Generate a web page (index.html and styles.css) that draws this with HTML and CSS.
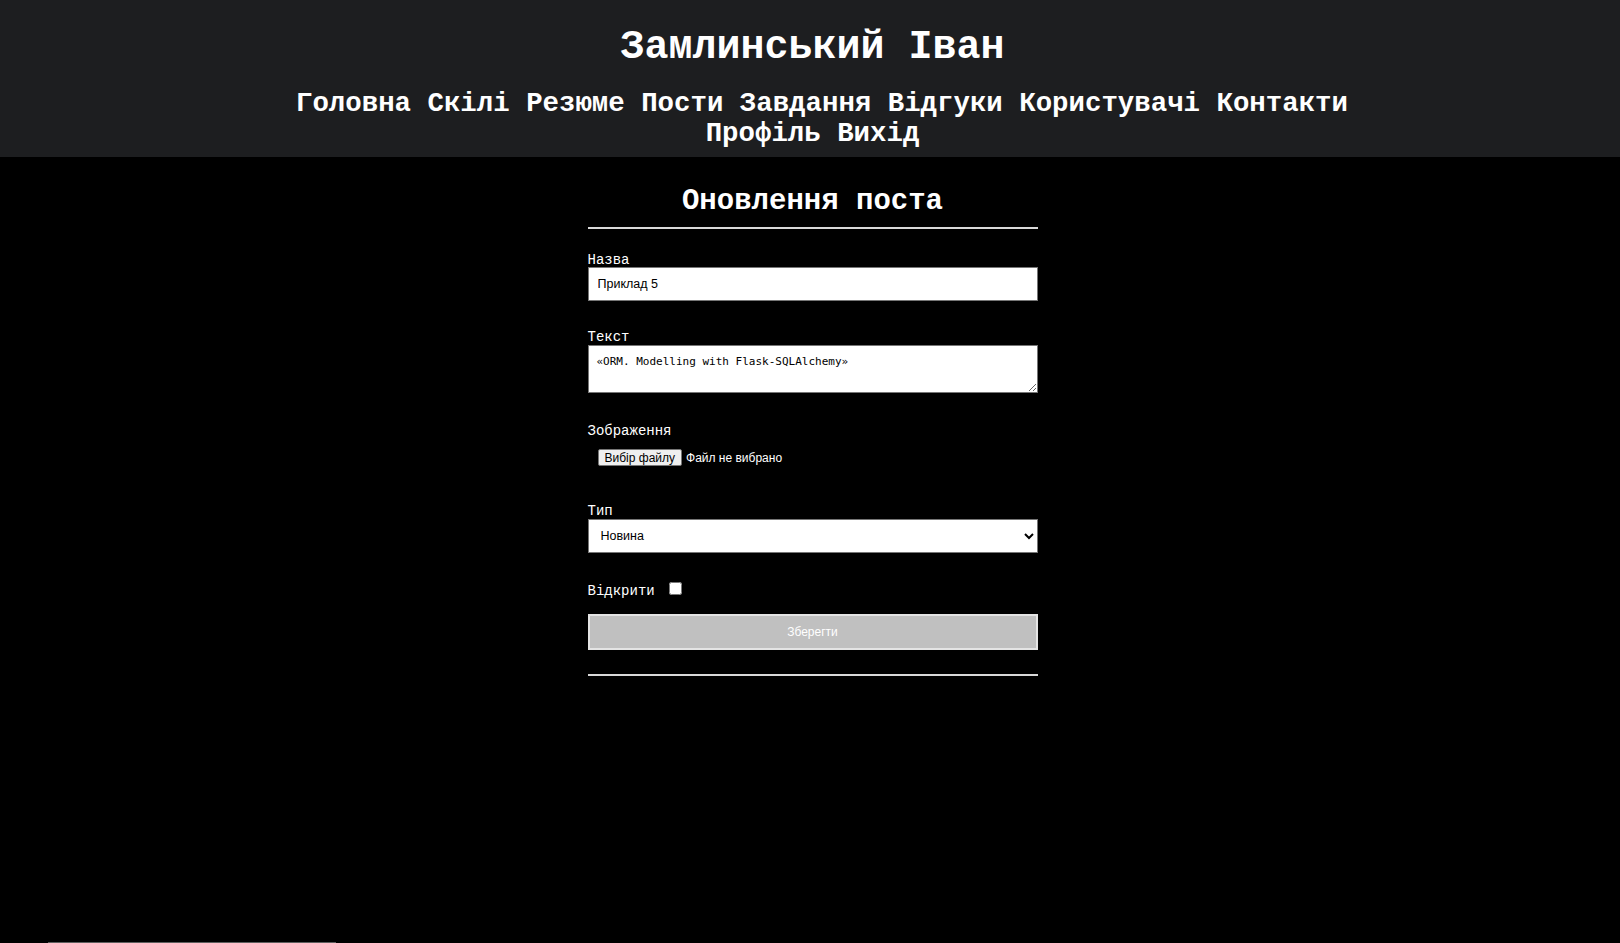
FILE: index.html
```html
<!DOCTYPE html>
<html lang="uk">
<head>
<meta charset="utf-8">
<title>Оновлення поста</title>
<link rel="stylesheet" href="styles.css">
</head>
<body>
<header class="site-header">
  <h1 class="site-title">Замлинський Іван</h1>
  <nav class="site-nav">
    <a href="#">Головна</a> <a href="#">Скілі</a> <a href="#">Резюме</a> <a href="#">Пости</a> <a href="#">Завдання</a> <a href="#">Відгуки</a> <a href="#">Користувачі</a> <a href="#">Контакти</a> <a href="#">Профіль</a> <a href="#">Вихід</a>
  </nav>
</header>
<main class="content">
  <h2 class="page-title">Оновлення поста</h2>
  <hr class="rule">
  <form class="post-form">
    <div class="field field-title">
      <label class="field-label" for="title">Назва</label>
      <input class="text-input" id="title" type="text" value="Приклад 5">
    </div>
    <div class="field field-text">
      <label class="field-label" for="text">Текст</label>
      <textarea class="text-area" id="text">«ORM. Modelling with Flask-SQLAlchemy»</textarea>
    </div>
    <div class="field field-image">
      <span class="field-label">Зображення</span>
      <div class="file-row">
        <input class="file-input" id="image" type="file">
        <label class="file-btn" for="image">Вибір файлу</label>
        <span class="file-name">Файл не вибрано</span>
      </div>
    </div>
    <div class="field field-type">
      <label class="field-label" for="type">Тип</label>
      <select class="select-input" id="type">
        <option>Новина</option>
        <option>Стаття</option>
      </select>
    </div>
    <div class="field field-open">
      <label class="field-label" for="open">Відкрити</label>
      <input class="check-input" id="open" type="checkbox">
    </div>
    <button class="submit-btn" type="submit">Зберегти</button>
  </form>
  <hr class="rule rule-bottom">
</main>
<div class="bottom-line"></div>
</body>
</html>
```
FILE: styles.css
```css
html, body {
  margin: 0;
  padding: 0;
  background: #000;
  color: #fff;
  font-family: "Liberation Mono", "Courier New", monospace;
}

.site-header {
  background: #1d1e20;
  padding: 25px 0 8px 5px;
  text-align: center;
}

.site-title {
  margin: 0 0 19px;
  font-size: 40px;
  line-height: 45px;
  font-weight: bold;
}

.site-nav {
  max-width: 1100px;
  margin: 0 auto;
  font-size: 27.4px;
  line-height: 30px;
  font-weight: bold;
}

.site-nav a {
  color: #fff;
  text-decoration: none;
}

.site-nav a:first-child {
  margin-left: 19px;
}

.content {
  width: 450px;
  margin: 0 auto;
  padding-left: 5px;
  padding-top: 28px;
}

.page-title {
  margin: 0;
  text-align: center;
  font-size: 29px;
  line-height: 33px;
  font-weight: bold;
}

.rule {
  margin: 9px 0 0;
  height: 2px;
  border: 0;
  background: #d9d9d9;
}

.rule-bottom {
  margin-top: 24px;
}

.post-form {
  display: flex;
  flex-direction: column;
  margin-top: 23px;
}

.field {
  display: flex;
  flex-direction: column;
}

.field-label {
  font-size: 14px;
  line-height: 16px;
  color: #fff;
}

.field-text { margin-top: 28px; }
.field-image { margin-top: 30px; }
.field-type { margin-top: 37px; }
.field-open {
  margin-top: 29px;
  flex-direction: row;
  align-items: center;
}

.text-input {
  box-sizing: border-box;
  height: 34px;
  width: 100%;
  margin: -1px 0 0;
  padding: 0 9px;
  border: 1px solid #767676;
  background: #fff;
  color: #000;
  font-family: "Liberation Sans", Arial, sans-serif;
  font-size: 12.5px;
}

.text-area {
  box-sizing: border-box;
  display: block;
  width: 100%;
  height: 48px;
  margin: 0;
  padding: 9px 8px;
  border: 1px solid #767676;
  background: #fff;
  color: #000;
  font-family: "DejaVu Sans Mono", monospace;
  font-size: 11px;
  line-height: 13px;
}

.file-row {
  display: flex;
  align-items: center;
  margin-top: 10px;
  padding-left: 10px;
  font-family: "Liberation Sans", Arial, sans-serif;
  font-size: 12px;
  line-height: 14px;
}

.file-input {
  display: none;
}

.file-btn {
  display: inline-block;
  padding: 1px 6px 0;
  margin-right: 4px;
  background: #efefef;
  color: #000;
  border: 1px solid #767676;
  border-radius: 2px;
  cursor: pointer;
}

.file-name {
  color: #fff;
}

.select-input {
  box-sizing: border-box;
  height: 34px;
  width: 100%;
  margin: 0;
  padding: 0 8px;
  border: 1px solid #767676;
  border-radius: 0;
  background: #fff;
  color: #000;
  font-family: "Liberation Sans", Arial, sans-serif;
  font-size: 12.5px;
}

.check-input {
  width: 13px;
  height: 13px;
  margin: 0 0 4px 14px;
}

.submit-btn {
  box-sizing: border-box;
  margin-top: 15px;
  width: 100%;
  height: 36px;
  background: #c0c0c0;
  border: 2px solid #e4e4e4;
  color: #fff;
  font-family: "Liberation Sans", Arial, sans-serif;
  font-size: 12px;
  cursor: pointer;
}

.bottom-line {
  position: fixed;
  left: 48px;
  bottom: 0;
  width: 288px;
  height: 1px;
  background: #5e5e5e;
}
```
